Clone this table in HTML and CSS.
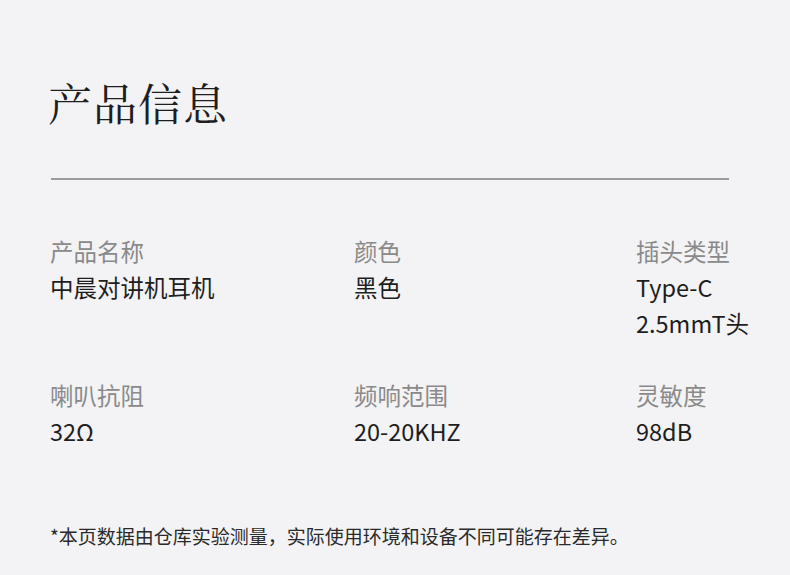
FILE: index.html
```html
<!DOCTYPE html>
<html lang="zh-CN">
<head>
  <meta charset="UTF-8" />
  <title>产品信息</title>
  <link rel="stylesheet" href="styles.css">
</head>
<body>
  <div class="page">
    <h1 class="title">产品信息</h1>
    <div class="divider"></div>

    <div class="specs">
      <div class="spec">
        <div class="label">产品名称</div>
        <div class="value">中晨对讲机耳机</div>
      </div>
      <div class="spec">
        <div class="label">颜色</div>
        <div class="value">黑色</div>
      </div>
      <div class="spec">
        <div class="label">插头类型</div>
        <div class="value">Type-C<br>2.5mmT头</div>
      </div>
      <div class="spec">
        <div class="label">喇叭抗阻</div>
        <div class="value">32Ω</div>
      </div>
      <div class="spec">
        <div class="label">频响范围</div>
        <div class="value">20-20KHZ</div>
      </div>
      <div class="spec">
        <div class="label">灵敏度</div>
        <div class="value">98dB</div>
      </div>
    </div>

    <p class="note">*本页数据由仓库实验测量，实际使用环境和设备不同可能存在差异。</p>
  </div>
</body>
</html>
```

FILE: styles.css
```css
body {
  margin: 0;
  background: #f3f3f5;
  font-family: "Noto Sans CJK SC", "Noto Sans", sans-serif;
  color: #222;
}
.page {
  width: 790px;
  height: 575px;
  padding: 0 20px 0 50px;
  box-sizing: border-box;
  overflow: hidden;
}
.title {
  margin: 0;
  padding-top: 74px;
  font-family: "Noto Serif CJK SC", "Liberation Serif", serif;
  font-size: 44px;
  font-weight: 400;
  line-height: 56px;
  color: #1e1e1e;
  letter-spacing: 1px;
  margin-left: -2px;
}
.divider {
  margin-top: 48px;
  width: 678px;
  margin-left: 1px;
  height: 2px;
  background: #9c9c9c;
}
.specs {
  margin-top: 53px;
  display: grid;
  grid-template-columns: 304px 282px 1fr;
  row-gap: 36px;
}
.spec {
  font-size: 23.5px;
  line-height: 36px;
  white-space: nowrap;
}
.spec:nth-child(-n+3) {
  min-height: 108px;
}
.label {
  color: #8a8a8a;
}
.value {
  color: #1e1e1e;
}
.note {
  margin: 73px 0 0;
  font-size: 19px;
  line-height: 28px;
  color: #2a2a2a;
}
```
